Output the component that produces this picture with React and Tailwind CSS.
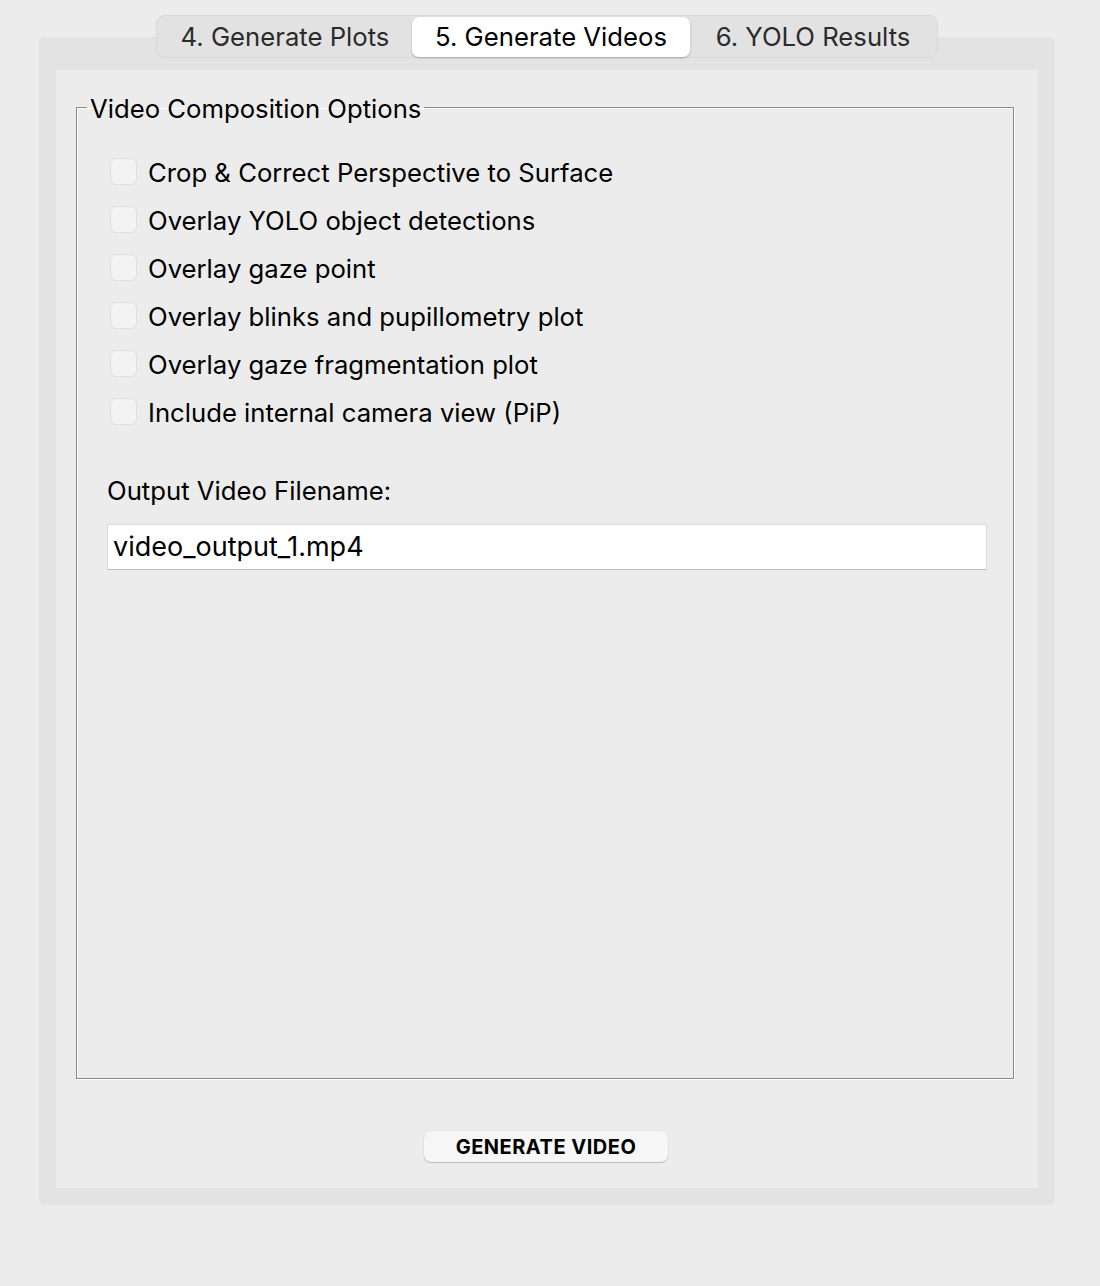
import React, { useState } from 'react';

const options = [
    'Crop & Correct Perspective to Surface',
    'Overlay YOLO object detections',
    'Overlay gaze point',
    'Overlay blinks and pupillometry plot',
    'Overlay gaze fragmentation plot',
    'Include internal camera view (PiP)',
];

const tabs = [
    { label: '4. Generate Plots', w: 'w-[254px]' },
    { label: '5. Generate Videos', w: 'w-[278px]' },
    { label: '6. YOLO Results', w: 'w-[246px]' },
];

const App = () => {
    const [active, setActive] = useState(1);
    const [checked, setChecked] = useState(options.map(() => false));
    const [filename, setFilename] = useState('video_output_1.mp4');

    const toggle = (i) => {
        setChecked(checked.map((c, j) => (j === i ? !c : c)));
    };

    return (
        <div className="min-h-[1286px] bg-[#ececec] pt-[15px] font-['Inter',sans-serif] text-[#1c1c1c]">
            {/* tab bar */}
            <div className="relative z-10 ml-[39px] flex w-[1016px] justify-center">
                <div className="flex h-[43px] items-stretch rounded-[9px] border border-[#d8d8d8] bg-[#e2e2e2] px-[1px] pt-[1px]">
                    {tabs.map((t, i) => (
                        <button
                            key={t.label}
                            onClick={() => setActive(i)}
                            className={`${t.w} flex items-center justify-center rounded-[7px] text-[25.7px] leading-none ${active === i ? 'bg-white text-black shadow-[0_1px_2px_rgba(0,0,0,0.25)]' : 'text-[#2b2b2b]'}`}
                        >
                            {t.label}
                        </button>
                    ))}
                </div>
            </div>

            {/* panel */}
            <div className="mt-[-21px] ml-[39px] w-[1016px] rounded-[6px] bg-[#e3e3e3] px-[17px] pt-[33px] pb-[17px]">
                <div className="flex h-[1118px] flex-col bg-[#ececec] pl-[20px] pr-[22px]">
                    <fieldset className="mt-[21px] h-[988px] w-[938px] border border-[#8a8a8a] shadow-[1px_1px_0_#ffffff,inset_1px_1px_0_#ffffff]">
                        <legend className="ml-[10px] px-[3px] pt-[4px] text-[25.7px] leading-[28px] text-black">
                            Video Composition Options
                        </legend>
                        <div className="flex flex-col gap-[21px] pl-[33px] pt-[35px]">
                            {options.map((opt, i) => (
                                <label key={opt} className="flex h-[27px] cursor-pointer items-center gap-[11px]">
                                    <span
                                        onClick={() => toggle(i)}
                                        className={`h-[27px] w-[27px] shrink-0 rounded-[6px] border border-[#dedede] ${checked[i] ? 'bg-[#3b82f6]' : 'bg-[#f3f3f3]'}`}
                                    />
                                    <span className="pt-[3px] text-[25.7px] leading-none text-black">{opt}</span>
                                </label>
                            ))}
                        </div>
                        <div className="pl-[30px] pr-[26px] pt-[53px]">
                            <div className="text-[25.7px] leading-none text-black">Output Video Filename:</div>
                            <input
                                className="mt-[20px] h-[46px] w-full border border-[#dadada] border-b-[#bdbdbd] bg-white px-[5px] text-[27px] text-black outline-none"
                                value={filename}
                                onChange={(e) => setFilename(e.target.value)}
                            />
                        </div>
                    </fieldset>
                    <div className="flex justify-center pt-[52px]">
                        <button className="h-[31px] w-[244px] rounded-[7px] bg-[#f6f6f6] text-[20px] font-bold tracking-[0.5px] text-black shadow-[0_1px_1px_rgba(0,0,0,0.18),0_0_0_0.5px_rgba(0,0,0,0.06)]">
                            GENERATE VIDEO
                        </button>
                    </div>
                </div>
            </div>
        </div>
    );
};

export default App;
